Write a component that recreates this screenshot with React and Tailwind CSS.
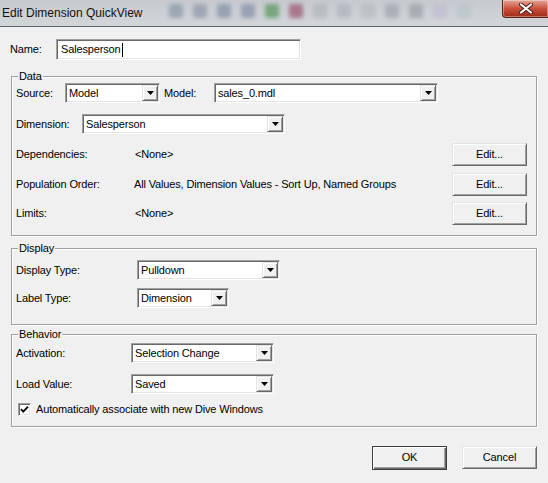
import React from "react";

const sunken =
  "border border-t-[#a0a0a0] border-l-[#a0a0a0] border-r-white border-b-white shadow-[inset_1px_1px_0_#696969,inset_-1px_-1px_0_#e3e3e3] bg-white";
const raised =
  "border border-t-[#e3e3e3] border-l-[#e3e3e3] border-r-[#696969] border-b-[#696969] shadow-[inset_1px_1px_0_#ffffff,inset_-1px_-1px_0_#a0a0a0] bg-[#f0f0f0]";

function Arrow() {
  return (
    <svg width="7" height="4" viewBox="0 0 7 4" className="block">
      <path d="M0 0H7L3.5 4Z" fill="#000" />
    </svg>
  );
}

function Combo({ className, value }) {
  return (
    <div className={`flex h-[20px] items-stretch p-[1px] ${sunken} ${className}`}>
      <div className="flex flex-1 items-center pl-[2px] leading-none">{value}</div>
      <div className={`flex w-[16px] items-center justify-center ${raised}`}>
        <Arrow />
      </div>
    </div>
  );
}

function Btn({ children, className = "" }) {
  return (
    <div className={`flex h-[23px] w-[75px] items-center justify-center ${raised} ${className}`}>
      {children}
    </div>
  );
}

function Group({ title, className = "", children }) {
  return (
    <div className={`mx-[11px] border border-[#a0a0a0] shadow-[1px_1px_0_#ffffff,inset_1px_1px_0_#ffffff] ${className}`}>
      <div className="-mt-[7px] ml-[6px] w-fit bg-[#f0f0f0] px-[1px] leading-[13px]">{title}</div>
      {children}
    </div>
  );
}

const icons = [
  "bg-[#7f8898]",
  "bg-[#838a9e]",
  "bg-[#76809a]",
  "bg-[#76829e]",
  "bg-[#3f8a45]",
  "bg-[#8e3f5a]",
  "bg-[#aab0b6]",
  "bg-[#a9aeb4]",
  "bg-[#b2b7bd]",
  "bg-[#979ca3]",
  "bg-[#8f959b]",
  "bg-[#bdb9cf]",
  "bg-[#b8c1c7]",
];

export default function App() {
  return (
    <div
      className="flex h-[483px] w-[548px] flex-col overflow-hidden bg-[#f0f0f0] text-[11px] tracking-[-0.15px] text-black"
      style={{ fontFamily: '"Liberation Sans", Arial, sans-serif' }}
    >
      {/* Title bar */}
      <div className="flex h-[27px] shrink-0 items-start border-b border-[#5d6167] bg-gradient-to-b from-[#c6cacf] to-[#d3d6d9]">
        <div className="mt-[6px] pl-[2px] text-[12px] leading-[15px] tracking-normal text-[#111]">Edit Dimension QuickView</div>
        <div className="ml-[26px] mt-[4px] flex gap-[10px] blur-[2px]">
          {icons.map((c, i) => (
            <div key={i} className={`h-[14px] w-[14px] rounded-[2px] opacity-60 ${c}`} />
          ))}
        </div>
        <div className="ml-auto flex h-[18px] w-[46px] items-center justify-center rounded-bl-[4px] border border-t-0 border-r-0 border-[#5a2318] bg-gradient-to-b from-[#e3a598] via-[#c9503c] to-[#9f2a18] shadow-[inset_0_0_0_1px_rgba(255,255,255,0.35)]">
          <svg width="14" height="11" viewBox="0 0 14 11">
            <path d="M2 1.5L12 9.5M12 1.5L2 9.5" stroke="#4a1a12" strokeWidth="4" strokeLinecap="round" />
            <path d="M2 1.5L12 9.5M12 1.5L2 9.5" stroke="#ffffff" strokeWidth="2.2" strokeLinecap="round" />
          </svg>
        </div>
      </div>

      {/* Name */}
      <div className="mt-[12px] flex items-center">
        <div className="ml-[10px] w-[46px]">Name:</div>
        <div className={`flex h-[21px] w-[245px] items-center pl-[4px] ${sunken}`}>
          <span>Salesperson</span>
          <span className="ml-[1px] h-[14px] w-[1px] bg-black" />
        </div>
      </div>

      {/* Data */}
      <Group title="Data" className="mt-[16px] pb-[10px]">
        <div className="flex items-center pl-[4px]">
          <div className="w-[49px]">Source:</div>
          <Combo className="w-[95px]" value="Model" />
          <div className="ml-[4px] w-[50px]">Model:</div>
          <Combo className="w-[224px]" value="sales_0.mdl" />
        </div>
        <div className="mt-[11px] flex items-center pl-[4px]">
          <div className="w-[66px]">Dimension:</div>
          <Combo className="w-[203px]" value="Salesperson" />
        </div>
        <div className="mt-[9px] flex items-center pl-[4px] pr-[9px]">
          <div className="w-[119px]">Dependencies:</div>
          <div>&lt;None&gt;</div>
          <Btn className="ml-auto">Edit...</Btn>
        </div>
        <div className="mt-[7px] flex items-center pl-[4px] pr-[9px]">
          <div className="w-[118px]">Population Order:</div>
          <div>All Values, Dimension Values - Sort Up, Named Groups</div>
          <Btn className="ml-auto">Edit...</Btn>
        </div>
        <div className="mt-[6px] flex items-center pl-[4px] pr-[9px]">
          <div className="w-[119px]">Limits:</div>
          <div>&lt;None&gt;</div>
          <Btn className="ml-auto">Edit...</Btn>
        </div>
      </Group>

      {/* Display */}
      <Group title="Display" className="mt-[12px] pb-[16px]">
        <div className="mt-[5px] flex items-center pl-[4px]">
          <div className="w-[121px]">Display Type:</div>
          <Combo className="w-[143px]" value="Pulldown" />
        </div>
        <div className="mt-[8px] flex items-center pl-[4px]">
          <div className="w-[121px]">Label Type:</div>
          <Combo className="w-[92px]" value="Dimension" />
        </div>
      </Group>

      {/* Behavior */}
      <Group title="Behavior" className="mt-[9px] pb-[8px]">
        <div className="mt-[2px] flex items-center pl-[4px]">
          <div className="w-[115px]">Activation:</div>
          <Combo className="w-[143px]" value="Selection Change" />
        </div>
        <div className="mt-[11px] flex items-center pl-[4px]">
          <div className="w-[115px]">Load Value:</div>
          <Combo className="w-[143px]" value="Saved" />
        </div>
        <div className="mt-[7px] flex items-center pl-[6px]">
          <div className={`flex h-[13px] w-[13px] items-center justify-center ${sunken}`}>
            <svg width="9" height="9" viewBox="0 0 9 9">
              <path d="M1 4.2L3.3 6.6L8 1.6" stroke="#000" strokeWidth="1.8" fill="none" />
            </svg>
          </div>
          <div className="ml-[5px]">Automatically associate with new Dive Windows</div>
        </div>
      </Group>

      {/* Buttons */}
      <div className="mt-[19px] flex justify-end gap-[15px] pr-[11px]">
        <div className="flex h-[24px] w-[75px] items-center justify-center border border-[#3c3c3c] bg-[#f0f0f0] shadow-[inset_1px_1px_0_#ffffff,inset_-1px_-1px_0_#696969,inset_-2px_-2px_0_#a0a0a0]">
          OK
        </div>
        <Btn>Cancel</Btn>
      </div>
    </div>
  );
}
